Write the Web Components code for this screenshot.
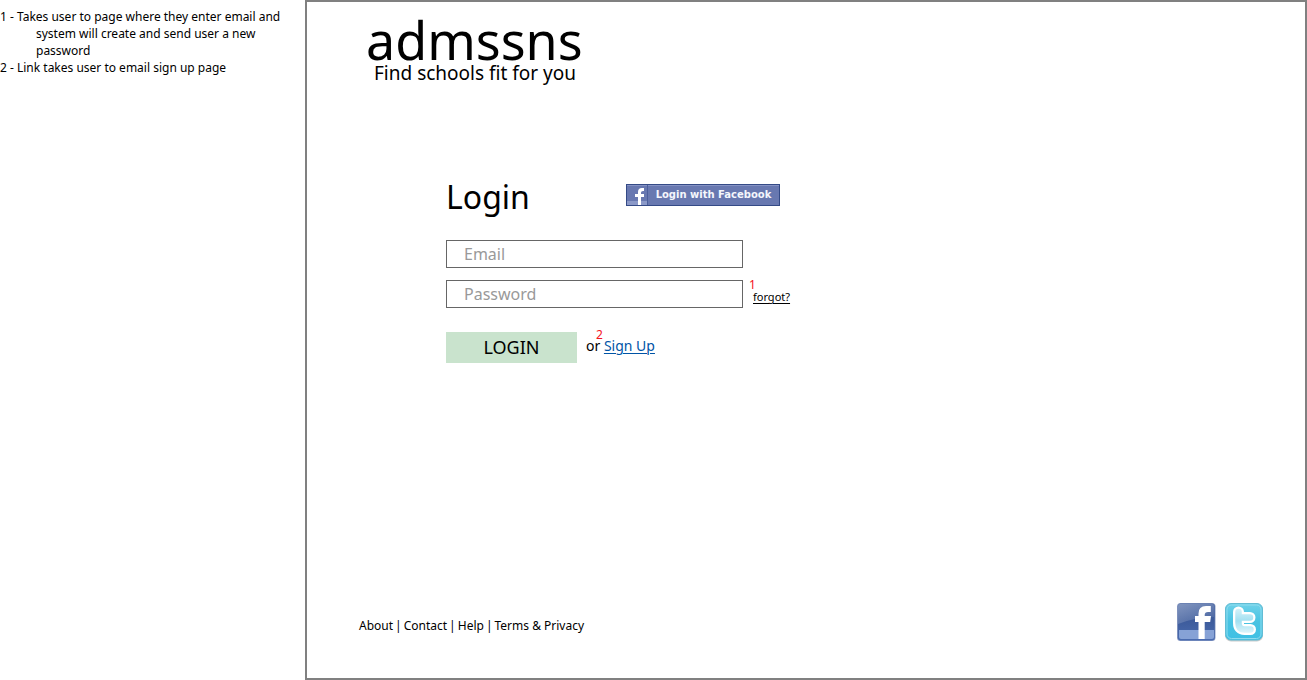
<!DOCTYPE html>
<html lang="en">
<head>
<meta charset="utf-8">
<meta name="viewport" content="width=device-width, initial-scale=1">
<title>admssns - Login</title>
<style>
  body { margin: 0; background: #fff; color: #000; font-family: "Noto Sans", "Open Sans", sans-serif; }
</style>
</head>
<body>
<login-wireframe></login-wireframe>

<script>
const define = (name, html, setup) => {
  const template = document.createElement('template');
  template.innerHTML = html;
  customElements.define(name, class extends HTMLElement {
    constructor() {
      super();
      this.attachShadow({ mode: 'open' }).append(template.content.cloneNode(true));
    }
    connectedCallback() { if (setup) setup(this, this.shadowRoot); }
  });
};

define('wire-notes', `
<style>
  :host { display: block; font-size: 12px; line-height: 17px; padding-top: 8px; }
  p { margin: 0; padding-left: 36px; text-indent: -36px; }
</style>
<p>1 - Takes user to page where they enter email and system will create and send user a new password</p>
<p>2 - Link takes user to email sign up page</p>`);

define('site-brand', `
<style>
  :host { display: block; }
  h1 { margin: 0; font-size: 52px; line-height: 46px; font-weight: 400; }
  p { margin: 0; padding-left: 8px; font-size: 19px; line-height: 20px; }
</style>
<h1>admssns</h1>
<p>Find schools fit for you</p>`);

define('facebook-button', `
<style>
  :host { display: block; }
  button { display: flex; align-items: stretch; box-sizing: border-box; width: 154px; height: 22px; margin: 0; padding: 0;
    border: 1px solid #344a86; background: #6878b0; box-shadow: inset 0 1px #8592c4; color: #f4f6fc; cursor: pointer;
    font: bold 10px/20px "DejaVu Sans", sans-serif; }
  svg { flex: none; width: 21px; height: 20px; }
  span { flex: 1; text-align: center; }
</style>
<button type="button">
  <svg viewBox="0 0 21 20" aria-hidden="true">
    <path d="M0 16h20v4H0z" fill="#8b99c8"/>
    <path d="M20 0h1v20h-1z" fill="#4c5f9c"/>
    <path d="M11 20v-8H8V9h3V7q0-4 4-4h2v3h-1q-2 0-2 1.500V9h3v3h-3v8z" fill="#fff"/>
  </svg>
  <span>Login with Facebook</span>
</button>`);

define('text-field', `
<style>
  :host { display: block; }
  input { display: block; box-sizing: border-box; width: 100%; height: 28px; margin: 0; padding: 0 17px; border: 1px solid #666;
    border-radius: 0; background: #fff; color: #000; font: 16px/24px "Noto Sans", "Open Sans", sans-serif; }
  input::placeholder { color: #999; opacity: 1; }
</style>
<input id="field">`, (host, root) => {
  const input = root.querySelector('input');
  input.type = host.getAttribute('type');
  input.placeholder = host.getAttribute('label');
  input.setAttribute('aria-label', host.getAttribute('label'));
});

define('noted-link', `
<style>
  :host { display: inline-block; position: relative; }
  a { color: inherit; text-underline-offset: 2px; text-decoration-thickness: 1px; }
  sup { position: absolute; left: -8px; bottom: 100%; margin-bottom: -7px; color: #f5121e; font-size: 12px; line-height: 16px; }
  :host([small]) sup { left: -4px; margin-bottom: -4px; }
</style>
<sup></sup><a href="#"><slot></slot></a>`, (host, root) => {
  root.querySelector('sup').textContent = host.getAttribute('note');
  root.querySelector('a').href = host.getAttribute('to');
});

define('login-form', `
<style>
  :host { display: block; }
  .head { display: grid; grid-template-columns: 180px auto; justify-content: start; align-items: center; }
  h2 { margin: 0; font-size: 32px; line-height: 44px; font-weight: 400; }
  facebook-button { margin-bottom: 4px; }
  form { display: grid; grid-template-columns: minmax(0, 297px) auto; justify-content: start; gap: 12px 10px; margin-top: 21px; }
  .first { grid-column: 1; }
  .forgot { align-self: end; margin-bottom: 3px; font-size: 11px; line-height: 16px; }
  .actions { grid-column: 1 / -1; display: flex; align-items: center; gap: 9px; margin-top: 12px; }
  button { width: 131px; height: 31px; margin: 0; padding: 0; border: 0; background: #c9e3cd; color: #000; cursor: pointer;
    font: 18px/31px "Noto Sans", "Open Sans", sans-serif; }
  .or { padding-bottom: 4px; font-size: 14px; line-height: 20px; }
  .sign { color: #0054a6; }
</style>
<div class="head"><h2>Login</h2><facebook-button></facebook-button></div>
<form>
  <text-field class="first" type="email" label="Email"></text-field>
  <text-field class="first" type="password" label="Password"></text-field>
  <noted-link class="forgot" small note="1" to="#forgot">forgot?</noted-link>
  <div class="actions">
    <button type="submit">LOGIN</button>
    <span class="or">or <noted-link class="sign" note="2" to="#signup">Sign Up</noted-link></span>
  </div>
</form>`);

define('social-links', `
<style>
  :host { display: flex; gap: 8px; }
  a, svg { display: block; width: 40px; height: 40px; }
</style>
<a href="#facebook" aria-label="Facebook"><svg viewBox="0 0 40 40">
  <defs><linearGradient id="f" x1="0" y1="0" x2="0" y2="1"><stop offset="0" stop-color="#4a67a3"/><stop offset=".45" stop-color="#3d5b9b"/><stop offset="1" stop-color="#4a6cb0"/></linearGradient>
  <linearGradient id="g" x1="0" y1="0" x2="1" y2="1"><stop offset="0" stop-color="#fff" stop-opacity=".3"/><stop offset="1" stop-color="#fff" stop-opacity=".04"/></linearGradient></defs>
  <rect x="1" y="1" width="38.500" height="38" rx="3.500" fill="#8d9dc4"/>
  <rect x="1.800" y="1.600" width="37" height="36.800" rx="3" fill="url(#f)"/>
  <path d="M2 4q0-2 2-2h32q2 0 2 2v11Q20 15 2 22z" fill="url(#g)"/>
  <path d="M3 28h35v7q0 2-2 2H5q-2 0-2-2z" fill="#86a2d6"/>
  <path d="M22.500 37V20H19v-6h3.500v-2.500Q22.500 4 30 4h4.800v6H32q-3.300 0-3.300 3v1H35l-.8 6h-5.500v17z" fill="#fff"/>
</svg></a>
<a href="#twitter" aria-label="Twitter"><svg viewBox="0 0 40 40">
  <defs><linearGradient id="t" x1="0" y1="0" x2="0" y2="1"><stop offset="0" stop-color="#6fd2ea"/><stop offset=".5" stop-color="#48c3e2"/><stop offset="1" stop-color="#3fc0e4"/></linearGradient>
  <linearGradient id="b" gradientUnits="userSpaceOnUse" x1="0" y1="6" x2="0" y2="32"><stop offset="0" stop-color="#d8f3fa"/><stop offset=".5" stop-color="#a2e0f1"/><stop offset="1" stop-color="#e2f6fb"/></linearGradient></defs>
  <rect x="1" y="2" width="38" height="37.500" rx="6" fill="#aaa" opacity=".6"/>
  <rect x="1.500" y="1.500" width="37" height="36.500" rx="5.500" fill="url(#t)" stroke="#62bcd4"/>
  <rect x="3" y="3" width="34" height="33.500" rx="4.500" fill="none" stroke="#8fdcee"/>
  <path d="M14.500 10v11q0 6.500 6 6.500h6M14.500 15.500H26" fill="none" stroke="#fff" stroke-width="11" stroke-linecap="round" stroke-linejoin="round"/>
  <path d="M14.500 10v11q0 6.500 6 6.500h6M14.500 15.500H26" fill="none" stroke="url(#b)" stroke-width="6.500" stroke-linecap="round" stroke-linejoin="round"/>
</svg></a>`);

define('site-footer', `
<style>
  :host { display: flex; justify-content: space-between; align-items: center; }
  nav { display: flex; gap: 2px; padding-top: 8px; font-size: 12px; line-height: 18px; }
  a { color: inherit; text-decoration: none; }
</style>
<nav><a href="#about">About</a><span>|</span><a href="#contact">Contact</a><span>|</span><a href="#help">Help</a><span>|</span><a href="#terms">Terms &amp; Privacy</a></nav>
<social-links></social-links>`);

define('login-wireframe', `
<style>
  :host { display: grid; grid-template-columns: 305px minmax(0, 1fr); min-height: 100vh; }
  wire-notes { padding-right: 12px; }
  main { box-sizing: border-box; display: flex; flex-direction: column; border: 2px solid #808080; padding: 15px 41px 36px 52px; }
  site-brand { padding-left: 7px; }
  login-form { margin: 92px 0 40px 87px; }
  site-footer { margin-top: auto; }
</style>
<wire-notes></wire-notes>
<main>
  <site-brand></site-brand>
  <login-form></login-form>
  <site-footer></site-footer>
</main>`);
</script>
</body>
</html>
